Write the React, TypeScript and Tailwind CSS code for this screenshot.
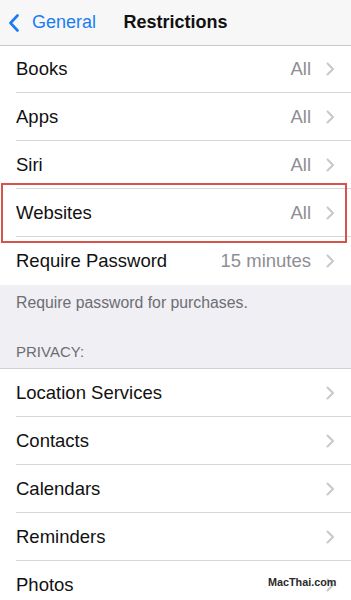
import React from 'react';

type Row = { label: string; value?: string; first?: boolean; last?: boolean };

const topRows: Row[] = [
  { label: 'Books', value: 'All', first: true },
  { label: 'Apps', value: 'All' },
  { label: 'Siri', value: 'All' },
  { label: 'Websites', value: 'All' },
  { label: 'Require Password', value: '15 minutes', last: true },
];

const privacyRows: Row[] = [
  { label: 'Location Services' },
  { label: 'Contacts' },
  { label: 'Calendars' },
  { label: 'Reminders' },
  { label: 'Photos', last: true },
];

function Chevron() {
  return (
    <svg width="9" height="14" viewBox="0 0 9 14" className="shrink-0">
      <polyline points="1.5,1.5 7,7 1.5,12.5" fill="none" stroke="#c7c7cc" strokeWidth="2" strokeLinecap="round" strokeLinejoin="round" />
    </svg>
  );
}

function SettingsRow({ label, value, first, last }: Row) {
  return (
    <div className={`flex items-center pl-4 ${first ? 'h-[47px]' : 'h-[48px]'}`}>
      <div className={`flex h-full flex-1 items-center pr-[16px] ${last ? '' : 'border-b border-[#d8d8dc]'}`}>
        <span className="flex-1 text-[18.5px] text-[#111]">{label}</span>
        {value ? <span className="mr-[15px] text-[18.5px] text-[#8e8e93]">{value}</span> : null}
        <Chevron />
      </div>
    </div>
  );
}

export default function App() {
  return (
    <div
      className="relative h-[600px] w-[351px] overflow-hidden bg-white"
      style={{ fontFamily: '"Liberation Sans", Arial, sans-serif' }}
    >
      <header className="relative flex h-[46px] items-center border-b border-[#c8c8cc] bg-[#f7f7f8]">
        <div className="flex items-center pl-[9px] text-[#1a7cf5]">
          <svg width="10" height="18" viewBox="0 0 10 18">
            <polyline points="8.5,1.5 1.5,9 8.5,16.5" fill="none" stroke="#1a7cf5" strokeWidth="2.6" strokeLinecap="round" strokeLinejoin="round" />
          </svg>
          <span className="ml-[13px] text-[18px]">General</span>
        </div>
        <span className="absolute left-1/2 -translate-x-1/2 text-[18px] font-bold text-[#111]">Restrictions</span>
      </header>

      <section>
        {topRows.map(row => (
          <SettingsRow key={row.label} {...row} />
        ))}
      </section>

      <div className="h-[84px] border-b border-[#d0d0d4] bg-[#efeff4] px-4 pt-[8px] text-[#6d6d72]">
        <p className="text-[15.8px] leading-[20px]">Require password for purchases.</p>
        <p className="mt-[30px] text-[15px] leading-[18px]">PRIVACY:</p>
      </div>

      <section>
        {privacyRows.map(row => (
          <SettingsRow key={row.label} {...row} />
        ))}
      </section>

      <div className="pointer-events-none absolute left-[1px] top-[183px] h-[60px] w-[346px] border-2 border-[#d6544c]" />
      <span className="absolute left-[268px] top-[574px] text-[10.8px] font-bold text-[#2a2a2a]">MacThai.com</span>
    </div>
  );
}
